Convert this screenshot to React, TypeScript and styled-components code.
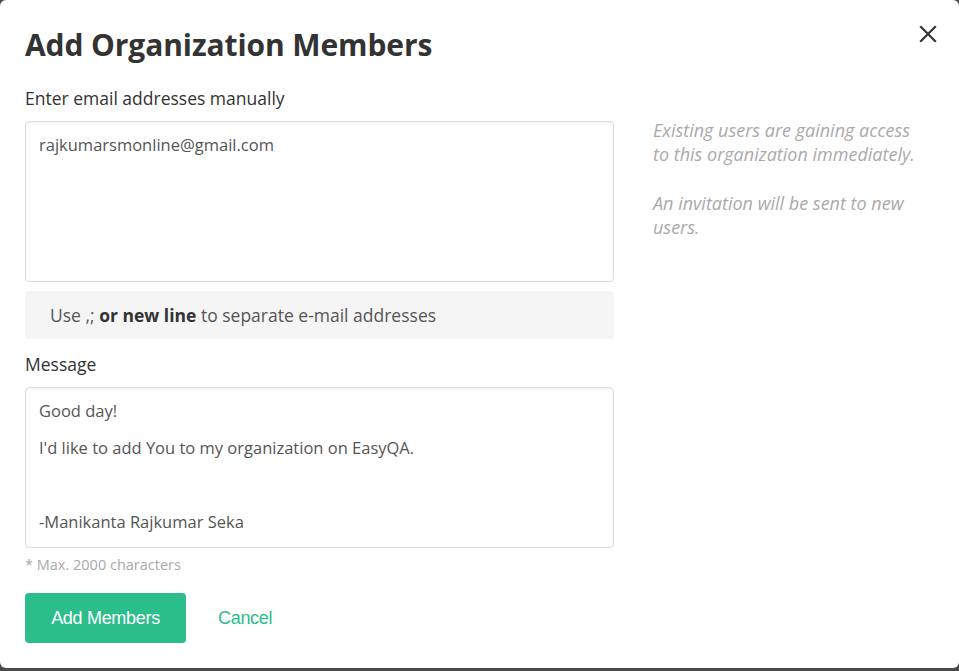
import React from 'react';
import styled, { createGlobalStyle } from 'styled-components';

const GlobalStyle = createGlobalStyle`
  html, body {
    margin: 0;
    padding: 0;
    background: #4a4a4a;
  }
  * {
    box-sizing: border-box;
  }
`;

const Modal = styled.div`
  width: 959px;
  height: 668px;
  background: #fff;
  border-radius: 6px;
  padding: 26px 25px 0 25px;
  font-family: 'Open Sans', 'Noto Sans', sans-serif;
  color: #333;
  position: relative;
`;

const Title = styled.h2`
  margin: 0;
  font-size: 30px;
  line-height: 38px;
  font-weight: 700;
  color: #333;
  letter-spacing: -0.1px;
`;

const CloseButton = styled.button`
  position: absolute;
  top: 22px;
  right: 19px;
  width: 24px;
  height: 24px;
  border: none;
  background: transparent;
  padding: 0;
  cursor: pointer;
  display: flex;
  align-items: center;
  justify-content: center;
`;

const Body = styled.div`
  display: flex;
  gap: 39px;
  margin-top: 22px;
`;

const FormColumn = styled.div`
  width: 589px;
  display: flex;
  flex-direction: column;
`;

const Label = styled.div`
  font-size: 17.5px;
  line-height: 24px;
  color: #333;
  margin-bottom: 11px;
`;

const Field = styled.div<{ $height: number }>`
  height: ${p => p.$height}px;
  border: 1px solid #ddd;
  border-radius: 4px;
  box-shadow: inset 0 1px 3px rgba(0, 0, 0, 0.07);
  padding: 12px 13px;
  font-size: 16.5px;
  color: #555;
`;

const FieldLine = styled.p`
  margin: 0 0 15px;
  line-height: 22px;
  min-height: 22px;
`;

const Hint = styled.div`
  margin-top: 9px;
  height: 48px;
  background: #f5f5f5;
  border-radius: 4px;
  padding: 0 25px;
  display: flex;
  align-items: center;
  font-size: 17.5px;
  color: #555;

  b {
    color: #333;
    font-weight: 700;
    white-space: pre;
  }
`;

const MessageLabel = styled(Label)`
  margin-top: 13px;
`;

const Counter = styled.div`
  margin-top: 8px;
  font-size: 14.5px;
  line-height: 18px;
  color: #aaa;
`;

const Actions = styled.div`
  display: flex;
  align-items: center;
  gap: 32px;
  margin-top: 19px;
`;

const PrimaryButton = styled.button`
  width: 161px;
  height: 50px;
  background: #2bbd8a;
  border: none;
  border-radius: 4px;
  color: #fff;
  font-family: 'Liberation Sans', Arial, sans-serif;
  font-size: 18px;
  letter-spacing: -0.3px;
  cursor: pointer;
`;

const LinkButton = styled.button`
  background: none;
  border: none;
  padding: 0;
  color: #2bbd8a;
  font-family: 'Liberation Sans', Arial, sans-serif;
  font-size: 18px;
  letter-spacing: -0.3px;
  cursor: pointer;
`;

const Aside = styled.div`
  width: 272px;
  padding-top: 32px;
  font-style: italic;
  font-size: 18px;
  line-height: 24px;
  color: #aaa;

  p {
    margin: 0 0 25px;
  }
`;

export default function App() {
  return (
    <>
      <GlobalStyle />
      <Modal>
        <Title>Add Organization Members</Title>
        <CloseButton aria-label="Close">
          <svg width="18" height="18" viewBox="0 0 18 18">
            <path d="M2 2 L16 16 M16 2 L2 16" stroke="#333" strokeWidth="2.2" strokeLinecap="square" />
          </svg>
        </CloseButton>
        <Body>
          <FormColumn>
            <Label>Enter email addresses manually</Label>
            <Field $height={161}>
              <FieldLine>rajkumarsmonline@gmail.com</FieldLine>
            </Field>
            <Hint>
              Use ,; <b> or new line </b>to separate e-mail addresses
            </Hint>
            <MessageLabel>Message</MessageLabel>
            <Field $height={161}>
              <FieldLine>Good day!</FieldLine>
              <FieldLine>I'd like to add You to my organization on EasyQA.</FieldLine>
              <FieldLine />
              <FieldLine>-Manikanta Rajkumar Seka</FieldLine>
            </Field>
            <Counter>* Max. 2000 characters</Counter>
            <Actions>
              <PrimaryButton>Add Members</PrimaryButton>
              <LinkButton>Cancel</LinkButton>
            </Actions>
          </FormColumn>
          <Aside>
            <p>Existing users are gaining access to this organization immediately.</p>
            <p>An invitation will be sent to new users.</p>
          </Aside>
        </Body>
      </Modal>
    </>
  );
}
